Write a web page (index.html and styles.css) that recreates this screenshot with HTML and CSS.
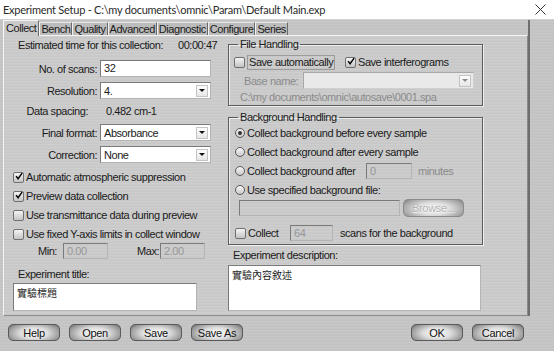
FILE: index.html
```html
<!DOCTYPE html>
<html lang="en">
<head>
    <meta charset="UTF-8">
    <title>Experiment Setup</title>
    <link rel="stylesheet" href="styles.css">
</head>
<body>
<div class="window">
    <div class="titlebar">
        <span class="title">Experiment Setup - C:\my documents\omnic\Param\Default Main.exp</span>
        <svg class="close" width="11" height="11" viewBox="0 0 11 11"><path d="M0.5 0.5L10.5 10.5M10.5 0.5L0.5 10.5" stroke="#333" stroke-width="1" fill="none"/></svg>
    </div>

    <div class="main">
        <div class="tabarea">
            <div class="tabs">
                <span class="tab active">Collect</span>
                <span class="tab">Bench</span>
                <span class="tab">Quality</span>
                <span class="tab">Advanced</span>
                <span class="tab">Diagnostic</span>
                <span class="tab">Configure</span>
                <span class="tab">Series</span>
            </div>

            <div class="panel">
                <!-- left column -->
                <div class="col-left">
                    <div class="row estimate">
                        <span class="est-label">Estimated time for this collection:</span>
                        <span>00:00:47</span>
                    </div>
                    <div class="row field r-scans">
                        <label>No. of scans:</label>
                        <div class="input">32</div>
                    </div>
                    <div class="row field r-res">
                        <label>Resolution:</label>
                        <div class="select"><span>4.</span><i class="arrow"></i></div>
                    </div>
                    <div class="row info">
                        <span class="info-label">Data spacing:</span>
                        <span class="info-value">0.482 cm-1</span>
                    </div>
                    <div class="row field r-format">
                        <label>Final format:</label>
                        <div class="select"><span>Absorbance</span><i class="arrow"></i></div>
                    </div>
                    <div class="row field r-corr">
                        <label>Correction:</label>
                        <div class="select"><span>None</span><i class="arrow"></i></div>
                    </div>

                    <div class="checks">
                        <div class="check"><span class="cb"><svg width="11" height="11" viewBox="0 0 11 11"><path d="M1.5 5L4.2 8.5L9.8 0.8" stroke="#000" stroke-width="2" fill="none"/></svg></span>Automatic atmospheric suppression</div>
                        <div class="check"><span class="cb"><svg width="11" height="11" viewBox="0 0 11 11"><path d="M1.5 5L4.2 8.5L9.8 0.8" stroke="#000" stroke-width="2" fill="none"/></svg></span>Preview data collection</div>
                        <div class="check"><span class="cb"></span>Use transmittance data during preview</div>
                        <div class="check"><span class="cb"></span>Use fixed Y-axis limits in collect window</div>
                    </div>

                    <div class="row minmax">
                        <span class="mm-label">Min:</span>
                        <div class="input disabled mm-input">0.00</div>
                        <span class="mm-label max">Max:</span>
                        <div class="input disabled mm-input">2.00</div>
                    </div>

                    <div class="box-label title-label">Experiment title:</div>
                    <div class="textbox title-box">實驗標題</div>
                </div>

                <!-- right column -->
                <div class="col-right">
                    <fieldset class="group file-group">
                        <legend>File Handling</legend>
                        <div class="row fh-row1">
                            <span class="fh-item"><span class="cb"></span><span class="focus">Save automatically</span></span>
                            <span class="cb"><svg width="11" height="11" viewBox="0 0 11 11"><path d="M1.5 5L4.2 8.5L9.8 0.8" stroke="#000" stroke-width="2" fill="none"/></svg></span>Save interferograms
                        </div>
                        <div class="row fh-row2">
                            <span class="base-label">Base name:</span>
                            <div class="select disabled base-select"><span></span><i class="arrow"></i></div>
                        </div>
                        <div class="row fh-row3">C:\my documents\omnic\autosave\0001.spa</div>
                    </fieldset>

                    <fieldset class="group bg-group">
                        <legend>Background Handling</legend>
                        <div class="row radio"><span class="rb on"></span>Collect background before every sample</div>
                        <div class="row radio"><span class="rb"></span>Collect background after every sample</div>
                        <div class="row radio">
                            <span class="rb"></span><span class="after-label">Collect background after</span>
                            <div class="input disabled min-input">0</div>
                            <span class="muted minutes">minutes</span>
                        </div>
                        <div class="row radio"><span class="rb"></span>Use specified background file:</div>
                        <div class="row browse-row">
                            <div class="input disabled file-input"></div>
                            <button class="btn browse" disabled>Browse...</button>
                        </div>
                        <div class="row collect-row">
                            <span class="cb"></span><span class="collect-label">Collect</span>
                            <div class="input disabled scans-input">64</div>
                            <span class="scans-text">scans for the background</span>
                        </div>
                    </fieldset>

                    <div class="box-label desc-label">Experiment description:</div>
                    <div class="textbox desc-box">實驗內容敘述</div>
                </div>
            </div>
        </div>
        <div class="strip"></div>
    </div>

    <div class="buttonbar">
        <button class="btn">Help</button>
        <button class="btn">Open</button>
        <button class="btn">Save</button>
        <button class="btn">Save As</button>
        <div class="spacer"></div>
        <button class="btn">OK</button>
        <button class="btn">Cancel</button>
    </div>
</div>
</body>
</html>
```

FILE: styles.css
```css
* {
    box-sizing: border-box;
}
body {
    margin: 0;
    width: 554px;
    height: 351px;
    overflow: hidden;
    font-family: "Liberation Sans", Arial, sans-serif;
    font-size: 11px;
    letter-spacing: -0.45px;
    color: #1a1a1a;
    background: #c4c4c4;
}
.window {
    width: 554px;
    height: 351px;
    display: flex;
    flex-direction: column;
    background-color: #c4c4c4;
    background-image: repeating-linear-gradient(180deg, rgba(255,255,255,0.07) 0, rgba(255,255,255,0.07) 1px, rgba(0,0,0,0.02) 2px, rgba(0,0,0,0) 3px);
}

/* title bar */
.titlebar {
    height: 20px;
    background: #fff;
    border-bottom: 1px solid #d0d0d0;
    display: flex;
    align-items: center;
    padding: 0 8px 1px 3px;
}
.title {
    flex: 1;
    font-family: Lato, "Liberation Sans", sans-serif;
    font-size: 11px;
    letter-spacing: -0.25px;
    color: #2a2a2a;
}

/* tabs + panel */
.main {
    display: flex;
    height: 296px;
}
.tabarea {
    width: 528px;
    padding-left: 3px;
}
.strip {
    flex: 1;
    border-left: 2px solid #6e6e6e;
}
.tabs {
    height: 15px;
    display: flex;
    align-items: flex-end;
}
.tab {
    height: 13px;
    line-height: 12px;
    padding: 0 1px;
    background: #bcbcbc;
    border-top: 1px solid #e6e6e6;
    border-left: 1px solid #f2f2f2;
    border-right: 1px solid #6a6a6a;
}
.tab.active {
    height: 16px;
    line-height: 14px;
    padding: 0 2px;
    margin-bottom: -1px;
    position: relative;
    z-index: 1;
    background: #cacaca;
    border-top-color: #f4f4f4;
    border-left-color: #fafafa;
}
.panel {
    height: 281px;
    display: flex;
    background-color: #cacaca;
    background-image: repeating-linear-gradient(180deg, rgba(255,255,255,0.08) 0, rgba(255,255,255,0.08) 1px, rgba(0,0,0,0.02) 2px, rgba(0,0,0,0) 3px);
    border: 1px solid;
    border-color: #f4f4f4 #8a8a8a #8a8a8a #f4f4f4;
}
.col-left {
    width: 224px;
    display: flex;
    flex-direction: column;
}
.col-right {
    width: 255px;
    display: flex;
    flex-direction: column;
}
.row {
    display: flex;
    align-items: center;
    white-space: nowrap;
}

/* form controls */
.input,
.select,
.textbox {
    background: #fff;
    border: 1px solid;
    border-color: #7a7a7a #b4b4b4 #b4b4b4 #7a7a7a;
}
.input {
    height: 17px;
    line-height: 15px;
    padding-left: 3px;
}
.input.disabled {
    background: transparent;
    color: #979797;
    height: 16px;
    line-height: 14px;
}
.select {
    height: 17px;
    display: flex;
    align-items: center;
    justify-content: space-between;
    padding: 0 2px 0 3px;
}
.select.disabled {
    background: #e9e9e9;
    border-color: #a8a8a8 #d0d0d0 #d0d0d0 #a8a8a8;
}
.arrow {
    width: 12px;
    height: 12px;
    border: 1px solid #c4c4c4;
    background: linear-gradient(#fdfdfd, #e6e6e6);
    display: flex;
    align-items: center;
    justify-content: center;
}
.arrow::after {
    content: "";
    border-left: 3px solid transparent;
    border-right: 3px solid transparent;
    border-top: 3px solid #111;
}
.select.disabled .arrow::after {
    border-top-color: #8a8a8a;
}
.cb {
    width: 11px;
    height: 11px;
    flex: none;
    margin-right: 2px;
    border: 1px solid #707070;
    border-radius: 2px;
    background: linear-gradient(#f4f4f4, #c4c4c4);
    display: inline-flex;
    align-items: center;
    justify-content: center;
}
.cb svg {
    margin-top: -2px;
    margin-left: 1px;
}
.rb {
    width: 10px;
    height: 10px;
    flex: none;
    margin-right: 2px;
    border: 1px solid #5a5a5a;
    border-radius: 50%;
    background: linear-gradient(#f6f6f6, #cacaca);
    display: inline-flex;
    align-items: center;
    justify-content: center;
}
.rb.on::after {
    content: "";
    width: 4px;
    height: 4px;
    border-radius: 50%;
    background: #333;
}
.textbox {
    font-family: "Noto Sans CJK TC", sans-serif;
    font-size: 10px;
    letter-spacing: 0;
    line-height: 14px;
    padding: 2px 3px;
}
.muted {
    color: #8a8a8a;
}

/* left column rows */
.estimate {
    margin-top: 2px;
    height: 14px;
    padding-left: 14px;
}
.est-label {
    width: 160px;
}
.field {
    height: 17px;
}
.field label {
    width: 96px;
    text-align: right;
    padding-right: 3px;
}
.field .input,
.field .select {
    width: 111px;
}
.r-scans {
    margin-top: 8px;
}
.r-res,
.r-corr {
    margin-top: 5px;
}
.r-format {
    margin-top: 6px;
}
.info {
    margin-top: 5px;
    height: 14px;
}
.info-label {
    width: 84px;
    text-align: right;
}
.info-value {
    margin-left: 18px;
}
.checks {
    margin-top: 5px;
    display: flex;
    flex-direction: column;
    gap: 1px;
}
.check {
    height: 18px;
    display: flex;
    align-items: center;
    padding-left: 9px;
}
.minmax {
    height: 16px;
    padding-left: 34px;
}
.mm-label {
    width: 25px;
}
.mm-label.max {
    width: 23px;
    margin-left: 29px;
}
.mm-input {
    width: 45px;
}
.box-label {
    height: 14px;
    line-height: 14px;
}
.title-label {
    margin-top: 8px;
    padding-left: 14px;
}
.title-box {
    margin-top: 2px;
    margin-left: 9px;
    width: 184px;
    height: 28px;
}

/* right column groups */
.group {
    margin: 0;
    padding: 0 5px;
    width: 255px;
    border: 1px solid #5c5c5c;
    box-shadow: 1px 1px 0 #eeeeee, inset 1px 1px 0 #eeeeee;
}
.group legend {
    padding: 0 2px;
    margin-left: 4px;
    height: 12px;
    line-height: 12px;
}
.file-group {
    margin-top: 2px;
    padding-bottom: 1px;
}
.fh-row1 {
    margin-top: 4px;
    height: 16px;
}
.fh-item {
    width: 111px;
    display: flex;
    align-items: center;
}
.focus {
    border: 1px solid #9a9a9a;
    padding: 0 1px;
    line-height: 13px;
}
.fh-row2 {
    margin-top: 2px;
    height: 17px;
    padding-left: 10px;
}
.base-label {
    width: 59px;
    color: #8a8a8a;
}
.base-select {
    width: 171px;
}
.fh-row3 {
    margin-top: 1px;
    height: 14px;
    padding-left: 6px;
    color: #8a8a8a;
}
.bg-group {
    margin-top: 5px;
    padding-bottom: 2px;
}
.radio {
    height: 19px;
    padding-left: 1px;
}
.after-label {
    width: 119px;
}
.min-input {
    width: 46px;
}
.minutes {
    margin-left: 6px;
}
.browse-row {
    height: 18px;
    padding-left: 5px;
}
.file-input {
    width: 161px;
    height: 18px;
}
.collect-row {
    margin-top: 7px;
    height: 18px;
    padding-left: 1px;
}
.collect-label {
    width: 42px;
}
.scans-input {
    width: 43px;
}
.scans-text {
    margin-left: 7px;
}
.desc-label {
    margin-top: 3px;
    padding-left: 5px;
}
.desc-box {
    margin-top: 3px;
    width: 253px;
    height: 46px;
}

/* buttons */
.btn {
    width: 52px;
    height: 17px;
    padding: 0;
    font-family: "Liberation Sans", Arial, sans-serif;
    font-size: 11px;
    letter-spacing: -0.3px;
    color: #111;
    border: 1px solid #5a5a5a;
    border-radius: 5px;
    background: radial-gradient(ellipse 62% 85% at 50% 55%, #fdfdfd 0%, #dcdcdc 45%, #9c9c9c 82%, #6e6e6e 100%);
}
.btn.browse {
    width: 61px;
    height: 18px;
    margin-left: 3px;
    color: #b4b4b4;
    text-shadow: 0 1px 0 #f4f4f4;
    border-color: #8a8a8a;
    background: radial-gradient(ellipse 62% 85% at 50% 55%, #fbfbfb 0%, #dedede 45%, #a8a8a8 82%, #858585 100%);
}
.buttonbar {
    height: 35px;
    display: flex;
    align-items: flex-start;
    gap: 9px;
    padding: 8px 30px 0 8px;
}
.spacer {
    flex: 1;
}
```
